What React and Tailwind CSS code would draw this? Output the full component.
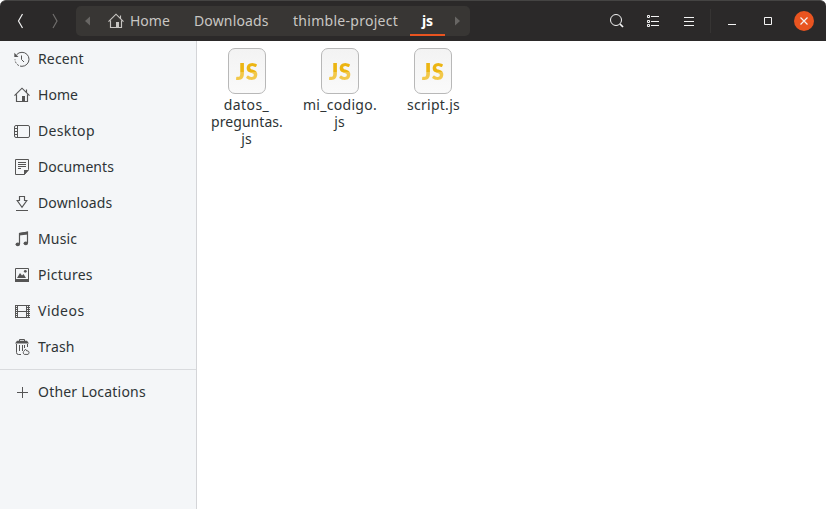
import React from "react";

function Svg({ children, className = "" }) {
  return (
    <svg
      width="16"
      height="16"
      viewBox="0 0 16 16"
      fill="none"
      stroke="currentColor"
      strokeWidth="1"
      className={"shrink-0 " + className}
    >
      {children}
    </svg>
  );
}

const HomeIcon = ({ className }) => (
  <Svg className={className}>
    <path d="M.5 8.700 8 1.200l7.500 7.500M12.500 2.500v3M2.500 7.500v7h3.500M13.500 7.500v7H10" strokeWidth="1.150" />
    <path d="M8 9h3v6H8z" fill="currentColor" stroke="none" />
    <path d="M5.500 14.500H8" />
  </Svg>
);

const RecentIcon = () => (
  <Svg>
    <path d="M2.600 3.700A7 7 0 0 1 8 1.300a7 7 0 0 1 0 14" />
    <path d="M8 15.300A7 7 0 0 1 1 8.300" strokeDasharray="2 1.300" />
    <path d="M7.500 4.500v4l2.500 2.500" />
    <path d="M.3 1.800v4.200h4.200z" fill="currentColor" stroke="none" />
  </Svg>
);

const DesktopIcon = () => (
  <Svg>
    <rect x=".5" y="2.500" width="15" height="12" rx="1.500" />
    <path d="M3.500 2.500v12M.5 5.500h3M.5 8.500h3M.5 11.500h3" />
  </Svg>
);

const DocumentsIcon = () => (
  <Svg>
    <path d="M1.500.5h13v10l-4 5h-9z" />
    <path d="M4 3.500h8M4 5.500h8M4 7.500h8M4 9.500h3" />
    <path d="M10 16v-5h5z" fill="currentColor" stroke="none" />
  </Svg>
);

const DownloadsIcon = () => (
  <Svg>
    <path d="M5.500 1.500h5v4h2.300L8 12.300 3.200 5.500h2.300z" strokeWidth="1.150" />
    <path d="M2 15.500h12" />
  </Svg>
);

const MusicIcon = () => (
  <Svg>
    <path d="M5.500 13V2.500l8-1.200V12" strokeWidth="1.200" />
    <path d="M5 1.900 14 .6v3L5 4.600z" fill="currentColor" stroke="none" />
    <ellipse cx="3.800" cy="13.300" rx="2.200" ry="1.900" fill="currentColor" stroke="none" />
    <ellipse cx="11.800" cy="12.300" rx="2.200" ry="1.900" fill="currentColor" stroke="none" />
  </Svg>
);

const PicturesIcon = () => (
  <Svg>
    <path d="M1.500 1.500h13v13h-13z" />
    <path d="M1 12h14v3H1zM3 11l3-5 2 2.500L9.500 7l2.500 4z" fill="currentColor" stroke="none" />
    <circle cx="11.300" cy="4.300" r="1.400" fill="currentColor" stroke="none" />
  </Svg>
);

const VideosIcon = () => (
  <Svg>
    <path d="M1.500 2v13M3.500 2v13M12.500 2v13M3.500 2.500h9M3.500 8.500h9M3.500 14.500h9M14.500 2v13" />
    <path d="M2.500 2v13M13.500 2v13M15.500 2v13" strokeDasharray="1 1" />
  </Svg>
);

const TrashIcon = () => (
  <Svg>
    <path d="M1 4.500 3 1.800h10l2 2.700z" fill="currentColor" stroke="none" />
    <path d="M5.500 2V.5h5V2M2.500 5v8.500q0 2 2 2H7M13.500 5v3M5.500 6v6M8.500 6v6M10.500 6v3" />
    <path d="M10.300 15.400a2 2 0 0 1 0-3.500l1.200-1.700 1.300 1.700h1.200a2 2 0 0 1 0 3.500z" />
  </Svg>
);

const PlusIcon = () => (
  <Svg>
    <path d="M8.500 3v11M3 8.500h11" />
  </Svg>
);

const places = [
  ["Recent", RecentIcon, "tracking-[0.15px]"],
  ["Home", HomeIcon, "tracking-[0.05px]"],
  ["Desktop", DesktopIcon, "tracking-[0.35px]"],
  ["Documents", DocumentsIcon, "tracking-[0.05px]"],
  ["Downloads", DownloadsIcon, "tracking-[0.12px]"],
  ["Music", MusicIcon, "tracking-[0.15px]"],
  ["Pictures", PicturesIcon, "tracking-[0.28px]"],
  ["Videos", VideosIcon, "tracking-[0.5px]"],
  ["Trash", TrashIcon, "tracking-[0.15px]"],
];

const files = [
  [
    ["datos_", "tracking-[0.4px]"],
    ["preguntas.", "pl-px tracking-[0.05px]"],
    ["js", ""],
  ],
  [
    ["mi_codigo.", "pl-px tracking-[0.3px]"],
    ["js", ""],
  ],
  [["script.js", "pl-0.5 tracking-[0.28px]"]],
];

function Place({ name, Icon, tracking }) {
  return (
    <div className="flex h-9 items-center gap-2 pl-3.5 text-[#555555]">
      <Icon />
      <span className={"whitespace-nowrap text-[#2e3436] " + tracking}>{name}</span>
    </div>
  );
}

function Header() {
  return (
    <header className="flex h-[41px] shrink-0 items-start rounded-t-md border-t border-[#454443] bg-[#2b2929] pt-[5px] text-[#c8c6c3]">
      <div className="flex h-[30px] w-[76px] shrink-0 items-center">
        <Svg className="ml-3 text-[#f0f0f0]">
          <path d="M10.500 1 6.500 8l4 7" strokeWidth="1.200" />
        </Svg>
        <Svg className="ml-[19px] text-[#706e6c]">
          <path d="m6 1 4 7-4 7" strokeWidth="1.200" />
        </Svg>
      </div>
      <nav className="flex h-[30px] w-[394px] shrink-0 items-center rounded-[5px] bg-[#383634]">
        <Svg className="ml-1 text-[#686664]">
          <path d="M10 3.500v9L5 8z" fill="currentColor" stroke="none" />
        </Svg>
        <HomeIcon className="ml-3" />
        <span className="ml-[6px] w-16 whitespace-nowrap">Home</span>
        <span className="w-[99px] whitespace-nowrap tracking-[0.15px]">Downloads</span>
        <span className="w-[117px] whitespace-nowrap tracking-[0.28px]">thimble-project</span>
        <span className="flex h-[30px] w-[35px] items-center justify-center border-b-2 border-[#e95420] pt-0.5 font-bold text-white">
          js
        </span>
        <Svg className="ml-1 text-[#686664]">
          <path d="M6 3.500v9L11 8z" fill="currentColor" stroke="none" />
        </Svg>
      </nav>
      <div className="ml-auto flex h-[30px] items-center text-[#f4f4f4]">
        <Svg className="mr-5">
          <circle cx="7" cy="7" r="5.500" />
          <path d="m11 11 3 3" strokeWidth="1.700" />
        </Svg>
        <Svg className="mr-5">
          <path d="M6 3.500h8M6 8.500h8M6 12.500h8M2.500 2.500h2v2h-2zM2.500 7.500h2v2h-2zM2.500 11.500h2v2h-2z" />
        </Svg>
        <Svg className="mr-[13px]">
          <path d="M3 4.500h10M3 8.500h10M3 12.500h10" />
        </Svg>
        <div className="mr-[13px] h-6 w-px bg-[#363433]" />
        <Svg className="mr-5">
          <path d="M4 11.500h8" />
        </Svg>
        <Svg className="mr-[18px]">
          <path d="M4.500 4.500h7v7h-7z" />
        </Svg>
        <div className="mr-3 flex h-5 w-5 items-center justify-center rounded-full bg-[#e95420]">
          <Svg>
            <path d="m4.500 4.500 7 7m0-7-7 7" strokeWidth="1.200" />
          </Svg>
        </div>
      </div>
    </header>
  );
}

function File({ lines }) {
  return (
    <div className="flex w-[93px] flex-col items-center">
      <div className="flex h-[46px] w-[38px] items-center justify-center rounded-[7px] border border-[#b8b8b8] bg-linear-to-b from-[#f3f3f3] to-[#fafafa] pt-0.5">
        <span className="bg-linear-to-b from-[#ecb512] from-50% to-[#f2c84a] to-50% bg-clip-text pl-px font-['Lato',sans-serif] text-[22px] leading-[24px] font-extrabold tracking-[0.3px] text-transparent">
          JS
        </span>
      </div>
      <div className="mt-0.5 flex flex-col items-center leading-[17px] text-[#2e3436]">
        {lines.map(([text, style]) => (
          <span key={text} className={style}>
            {text}
          </span>
        ))}
      </div>
    </div>
  );
}

export default function App() {
  return (
    <div className="flex h-[509px] w-[826px] flex-col overflow-hidden bg-white font-['Noto_Sans',sans-serif] text-[14px] leading-5">
      <Header />
      <div className="flex min-h-0 flex-1">
        <aside className="w-[197px] shrink-0 border-r border-[#d4d5d8] bg-[#f4f6f8]">
          {places.map(([name, Icon, tracking]) => (
            <Place key={name} name={name} Icon={Icon} tracking={tracking} />
          ))}
          <div className="mt-1 mb-1 h-px bg-[#d9dbde]" />
          <Place name="Other Locations" Icon={PlusIcon} tracking="tracking-[0.2px]" />
        </aside>
        <main className="flex flex-1 items-start pt-[7px] pl-[3px]">
          {files.map((lines) => (
            <File key={lines[0][0]} lines={lines} />
          ))}
        </main>
      </div>
    </div>
  );
}
